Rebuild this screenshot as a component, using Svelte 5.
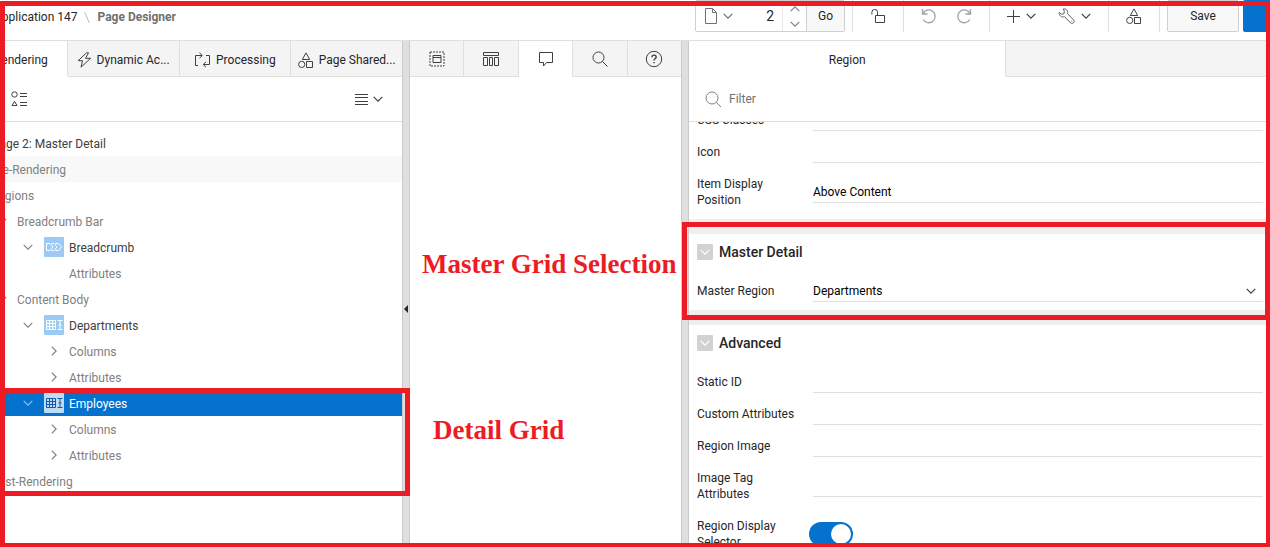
<script>
  const tree = [
    { id: 1, label: 'Page 2: Master Detail', level: -1, icon: 'page', dark: true },
    { id: 2, label: 'Pre-Rendering', level: 0, twisty: 'right', hover: true },
    { id: 3, label: 'Regions', level: 0, twisty: 'down' },
    { id: 4, label: 'Breadcrumb Bar', level: 1, twisty: 'down' },
    { id: 5, label: 'Breadcrumb', level: 2, twisty: 'down', icon: 'crumb', dark: true },
    { id: 6, label: 'Attributes', level: 3 },
    { id: 7, label: 'Content Body', level: 1, twisty: 'down' },
    { id: 8, label: 'Departments', level: 2, twisty: 'down', icon: 'grid', dark: true },
    { id: 9, label: 'Columns', level: 3, twisty: 'right' },
    { id: 10, label: 'Attributes', level: 3, twisty: 'right' },
    { id: 11, label: 'Employees', level: 2, twisty: 'down', icon: 'grid', selected: true },
    { id: 12, label: 'Columns', level: 3, twisty: 'right' },
    { id: 13, label: 'Attributes', level: 3, twisty: 'right' },
    { id: 14, label: 'Post-Rendering', level: 0, twisty: 'right' }
  ];

  const sections = [
    {
      fields: [
        { id: 'css-classes', label: 'CSS Classes', kind: 'text' },
        { id: 'icon', label: 'Icon', kind: 'text' },
        { id: 'item-position', label: 'Item Display Position', kind: 'select', value: 'Above Content' }
      ]
    },
    {
      title: 'Master Detail',
      fields: [
        { id: 'master-region', label: 'Master Region', kind: 'select', value: 'Departments', arrow: true }
      ]
    },
    {
      title: 'Advanced',
      fields: [
        { id: 'static-id', label: 'Static ID', kind: 'text' },
        { id: 'custom-attributes', label: 'Custom Attributes', kind: 'text' },
        { id: 'region-image', label: 'Region Image', kind: 'text' },
        { id: 'image-tag', label: 'Image Tag Attributes', kind: 'text' },
        { id: 'display-selector', label: 'Region Display Selector', kind: 'switch' }
      ]
    }
  ];
</script>

{#snippet chevron(dir = 'down')}
  <svg width="10" height="10" viewBox="0 0 10 10" class="chev {dir}" aria-hidden="true">
    <path d="M0.7 2.8 5 7.1 9.3 2.8" />
  </svg>
{/snippet}

{#snippet shapes()}
  <svg width="16" height="16" viewBox="0 0 16 16" aria-hidden="true">
    <path d="M8 .9 11.7 7.5H4.3ZM8.5 9.5h6v6h-6z" /><circle cx="3.7" cy="12.4" r="3.1" />
  </svg>
{/snippet}

<div class="app">
  <header>
    <nav class="crumbs" aria-label="Breadcrumb">
      <a href="#app">Application 147</a>
      <svg width="6" height="13" viewBox="0 0 6 13" aria-hidden="true"><path d="M.7 1 5.3 12" /></svg>
      <strong>Page Designer</strong>
    </nav>
    <div class="tools">
      <div class="pager">
        <button class="finder" aria-label="Page finder">
          <svg width="12" height="16" viewBox="0 0 12 16" aria-hidden="true"><path d="M.5.5h7l4 4v11H.5zM7.5.5v4h4" /></svg>
          {@render chevron()}
        </button>
        <input class="number" aria-label="Page number" value="2" />
        <div class="stepper">
          <button aria-label="Next page">{@render chevron('up')}</button>
          <button aria-label="Previous page">{@render chevron()}</button>
        </div>
        <button class="go">Go</button>
      </div>
      <div class="group lock">
        <button aria-label="Lock">
          <svg width="14" height="15" viewBox="0 0 14 15" aria-hidden="true"><path d="M4.5 6.5h9v7h-9zM6.5 6.5V3.2a2.7 2.7 0 0 0-5.6 0V5.5" /></svg>
        </button>
      </div>
      <div class="group history">
        <button aria-label="Undo">
          <svg width="16" height="16" viewBox="0 0 16 16" aria-hidden="true"><path d="M1.5 1v5h5M2 5.6A6.4 6.4 0 1 1 2.2 11.5" /></svg>
        </button>
        <button aria-label="Redo">
          <svg width="16" height="16" viewBox="0 0 16 16" aria-hidden="true"><path d="M14.5 1v5h-5M14 5.6A6.4 6.4 0 1 0 13.8 11.5" /></svg>
        </button>
      </div>
      <div class="group create">
        <button aria-label="Create">
          <svg width="13" height="13" viewBox="0 0 13 13" aria-hidden="true"><path d="M6.5 0v13M0 6.5h13" /></svg>
          {@render chevron()}
        </button>
        <button aria-label="Utilities" class="wrench">
          <svg width="17" height="17" viewBox="0 0 17 17" aria-hidden="true">
            <path d="M5.200 1C7.900.3 10.300 2.600 9.500 5.600L15.600 11.900C17.300 13.800 14.700 16.700 12.600 14.900L6.600 8.700C3.500 9.700.8 7.400 1.200 4.400L3.600 6.300 6 5.700 6.300 3.200Z" />
            <path d="M13.500 13.200h.8" />
          </svg>
          {@render chevron()}
        </button>
      </div>
      <div class="group shared">
        <button aria-label="Shared components">{@render shapes()}</button>
      </div>
      <button class="save">Save</button>
      <button class="run" aria-label="Save and run page"></button>
    </div>
  </header>

  <main>
    <section class="panel side">
      <div class="tabs" role="tablist">
        <button role="tab" aria-selected="true" class="tab on">
          <svg width="14" height="14" viewBox="0 0 14 14" aria-hidden="true"><path d="M1 2.500h12M1 7h12M1 11.500h12" /></svg>
          Rendering
        </button>
        <button role="tab" aria-selected="false" class="tab">
          <svg width="15" height="16" viewBox="0 0 15 16" aria-hidden="true"><path d="M9.500.8 1.200 8.700H5.500L4 15.200 13.600 6.300H8.500L11.500.8Z" /></svg>
          Dynamic Ac...
        </button>
        <button role="tab" aria-selected="false" class="tab">
          <svg width="17" height="16" viewBox="0 0 17 16" aria-hidden="true">
            <path d="M4 13.500H1.500V3.500H8M5.500.8 8.300 3.500 5.500 6.200M12 3.500h3.500v9H9.500M12 9.800 9.200 12.500 12 15.200" />
          </svg>
          Processing
        </button>
        <button role="tab" aria-selected="false" class="tab">{@render shapes()} Page Shared...</button>
      </div>
      <div class="bar">
        <button aria-label="Group by component type">
          <svg width="16" height="16" viewBox="0 0 16 16" aria-hidden="true">
            <circle cx="3.500" cy="3.500" r="2.700" /><path d="M3.500 10.300 6 14.500H1ZM9 2.500H16M9 5.500H16M9 11.500H16M9 14.500H16" />
          </svg>
        </button>
        <button aria-label="Tree menu">
          <svg width="13" height="11" viewBox="0 0 13 11" aria-hidden="true"><path d="M0 .5h13M0 3.500h13M0 7.500h13M0 10.500h13" /></svg>
          {@render chevron()}
        </button>
      </div>
      <ul class="tree" role="tree">
        {#each tree as node (node.id)}
          <li
            role="treeitem"
            aria-selected={!!node.selected}
            class:dark={node.dark}
            class:hover={node.hover}
            class:selected={node.selected}
            style="--level: {node.level}"
          >
            <span class="twisty">{#if node.twisty}{@render chevron(node.twisty)}{/if}</span>
            {#if node.icon}
              <span class="node-icon">
                {#if node.icon === 'grid'}
                  <svg width="18" height="12" viewBox="0 0 18 12" aria-hidden="true">
                    <path d="M1.500 1.500h9v9h-9zM1.500 4.500h9M1.500 7.500h9M4.500 1.500v9M7.500 1.500v9M12.500 1.500h5M12.500 10.500h5M15 1.500v9M13.500 6h3" />
                  </svg>
                {:else if node.icon === 'crumb'}
                  <svg width="18" height="10" viewBox="0 0 18 10" aria-hidden="true">
                    <path d="M1.500 1.500H5L8 5 5 8.500H1.500zM6.500 1.500h2.500L12 5 9 8.500H6.500M10.500 1.500h3L16.500 5 13.500 8.500H10.500" />
                  </svg>
                {/if}
              </span>
            {/if}
            <span class="name">{node.label}</span>
          </li>
        {/each}
      </ul>
    </section>

    <div class="splitter">
      <svg width="4" height="8" viewBox="0 0 4 8" aria-hidden="true"><path d="M4 0v8L0 4z" /></svg>
    </div>

    <section class="panel middle">
      <div class="tabs" role="tablist">
        <button role="tab" aria-selected="false" class="tab" aria-label="Layout">
          <svg width="16" height="16" viewBox="0 0 16 16" aria-hidden="true">
            <path stroke-dasharray="2 1" d="M1 1h14v14H1z" /><path d="M4 4.500h8v7H4zM4 6.500h8" />
          </svg>
        </button>
        <button role="tab" aria-selected="false" class="tab" aria-label="Component view">
          <svg width="18" height="16" viewBox="0 0 18 16" aria-hidden="true">
            <path d="M1.500 1.500h15v3h-15zM1.500 6.500h4v8h-4zM7.500 6.500h3v8h-3zM12.500 6.500h4v8h-4z" />
          </svg>
        </button>
        <button role="tab" aria-selected="true" class="tab on" aria-label="Messages">
          <svg width="16" height="16" viewBox="0 0 16 16" aria-hidden="true"><path d="M1.500 1.500h13v10H8.500L5.500 15V11.500h-4z" /></svg>
        </button>
        <button role="tab" aria-selected="false" class="tab" aria-label="Page search">
          <svg width="16" height="16" viewBox="0 0 16 16" aria-hidden="true"><circle cx="6.500" cy="6.500" r="5.500" /><path d="M10.500 10.500 15.500 15.500" /></svg>
        </button>
        <button role="tab" aria-selected="false" class="tab" aria-label="Help">
          <svg width="18" height="18" viewBox="0 0 18 18" aria-hidden="true">
            <circle cx="9" cy="9" r="7.700" /><path stroke-width="1.400" d="M6.900 7.200C6.900 4.500 11.200 4.500 11.200 7.100 11.200 8.800 9 8.700 9 10.500M9 11.900v1.400" />
          </svg>
        </button>
      </div>
    </section>

    <div class="splitter"></div>

    <section class="panel props">
      <div class="tabs" role="tablist">
        <button role="tab" aria-selected="true" class="tab on">Region</button>
        <span class="rest"></span>
      </div>
      <div class="bar filter">
        <svg width="17" height="17" viewBox="0 0 17 17" aria-hidden="true"><circle cx="7" cy="7" r="6" /><path d="M11.300 11.300 16 16" /></svg>
        <input type="search" aria-label="Filter" placeholder="Filter" />
      </div>
      <div class="scroller">
        {#each sections as section}
          <section class="block">
            {#if section.title}
              <h2><button aria-label="Collapse">{@render chevron()}</button>{section.title}</h2>
            {/if}
            {#each section.fields as field (field.id)}
              <div class="field">
                <label for={field.id}>{field.label}</label>
                {#if field.kind === 'text'}
                  <input id={field.id} type="text" />
                {:else if field.kind === 'select'}
                  <div class="choice">
                    <select id={field.id}><option>{field.value}</option></select>
                    {#if field.arrow}{@render chevron()}{/if}
                  </div>
                {:else}
                  <input id={field.id} class="switch" type="checkbox" role="switch" checked />
                {/if}
              </div>
            {/each}
          </section>
        {/each}
      </div>
    </section>

    <div class="mark mark-detail"></div>
    <div class="mark mark-master"></div>
    <p class="note note-master">Master Grid Selection</p>
    <p class="note note-detail">Detail Grid</p>
  </main>
  <div class="mark outline"></div>
</div>

<style>
  :global(body) { margin: 0; background: #fff; }
  .app {
    --red: #ed1c24;
    --line: #dfdfdf;
    --clip: 44px;
    position: relative;
    display: flex;
    flex-direction: column;
    height: 100vh;
    overflow: hidden;
    font: 12px/16px Roboto, "Open Sans", sans-serif;
    color: #262626;
  }
  .app * { box-sizing: border-box; }
  button, input, select { font: inherit; color: inherit; border: 0; margin: 0; padding: 0; background: none; border-radius: 0; outline: 0; }
  svg { fill: none; stroke: #404040; stroke-width: 1; flex: none; display: block; }
  .chev { stroke-width: 1.2; }
  .chev.right { transform: rotate(-90deg); }
  .chev.up { transform: rotate(180deg); }

  header { display: flex; flex: none; justify-content: space-between; height: 41px; border-bottom: 1px solid var(--line); }
  .crumbs { display: flex; align-items: center; gap: 7px; height: 34px; margin-left: -6px; white-space: nowrap; }
  .crumbs a { color: #262626; text-decoration: none; }
  .crumbs svg { stroke: #bbb; }
  .crumbs strong { color: #707070; font-weight: 700; }
  .tools { display: flex; height: 32px; }
  .tools button { display: flex; align-items: center; justify-content: center; gap: 6px; }
  .pager { display: flex; width: 150px; margin-right: 7px; border: 1px solid #cfcfcf; border-radius: 2px; }
  .finder { width: 46px; }
  .finder svg { stroke: #707070; }
  .number { width: 40px; padding-right: 8px; text-align: right; font-size: 14px; }
  .stepper { display: flex; flex-direction: column; justify-content: center; width: 24px; border-left: 1px solid #e8e8e8; }
  .stepper button { flex: 1; }
  .stepper svg { stroke: #808080; }
  .go { flex: 1; border-left: 1px solid #cfcfcf; background: #f8f8f8; }
  .group { display: flex; align-items: center; justify-content: center; border-left: 1px solid var(--line); }
  .lock { width: 51px; }
  .history { width: 86px; gap: 19px; }
  .history svg { stroke: #a0a0a0; stroke-width: 1.300; }
  .create { width: 119px; gap: 22px; }
  .wrench svg:first-child { stroke: #606060; }
  .shared { width: 52px; border-right: 1px solid var(--line); }
  .save { width: 72px; margin: 0 4px 0 7px; border: 1px solid #cfcfcf; border-radius: 2px; background: #f8f8f8; }
  .run { width: 27px; border-radius: 2px 0 0 2px; background: #0572ce; }

  main {
    position: relative;
    display: grid;
    flex: 1;
    min-height: 0;
    grid-template-columns: 446fr 8px 271fr 8px 581fr;
    margin-left: calc(-1 * var(--clip));
  }
  .panel { display: flex; flex-direction: column; min-width: 0; min-height: 0; overflow: hidden; }
  .splitter { display: flex; align-items: center; justify-content: flex-end; padding-right: 1px; border: solid #cacaca; border-width: 0 1px; background: #dfdfdf; }
  .splitter svg { fill: #262626; stroke: none; margin-top: 30px; }
  .tabs { display: flex; flex: none; height: 36px; }
  .tab {
    display: flex; flex: 1; align-items: center; justify-content: center; gap: 5px; min-width: 0; padding-top: 2px;
    border-right: 1px solid var(--line); border-bottom: 1px solid var(--line);
    background: #f4f4f4; white-space: nowrap;
  }
  .middle .tab { padding-top: 0; }
  .tab:last-child { border-right: 0; }
  .tab.on { background: #fff; border-bottom-color: #fff; }
  .bar { display: flex; flex: none; align-items: center; justify-content: space-between; height: 45px; border-bottom: 1px solid var(--line); }
  .side .bar { padding: 0 19px 0 55px; }
  .bar button { display: flex; align-items: center; gap: 5px; }

  .tree { list-style: none; margin: 8px 0 0; padding: 0; }
  .tree li { display: flex; align-items: center; height: 26px; padding-left: calc(38px + var(--level) * 26px - 26px); color: #808080; }
  .tree li:first-child { padding-left: 10px; }
  .tree li:first-child .twisty { display: none; }
  .name { padding-top: 1px; }
  .twisty { display: flex; justify-content: center; width: 16px; margin-right: 7px; }
  .twisty svg { stroke: #808080; }
  .node-icon { display: flex; align-items: center; justify-content: center; width: 20px; height: 20px; margin: 0 5px 0 1px; border-radius: 1px; background: #9bcbf4; }
  .node-icon svg { stroke: #fff; }
  .tree .dark { color: #404040; }
  .tree .hover { background: #f8f8f8; }
  .tree .selected { background: #0572ce; color: #fff; }
  .selected .twisty svg { stroke: #8fc4f0; }
  .selected .node-icon { background: #c0dcf3; }
  .selected .node-icon svg { stroke: #1259b0; }

  .props .tab { flex: 317 0 0; }
  .rest { flex: 264 0 0; background: #f4f4f4; border-bottom: 1px solid var(--line); }
  .filter { justify-content: flex-start; gap: 7px; padding: 0 16px; }
  .filter svg { stroke: #808080; }
  .filter input { flex: 1; appearance: none; }
  .filter input::placeholder { color: #707070; opacity: 1; }
  .scroller { flex: 1; min-height: 0; overflow: hidden; background: #efefef; }
  .block { margin-bottom: 15px; padding-bottom: 3px; background: #fff; }
  .block:first-child { margin-top: -18px; }
  h2 { display: flex; align-items: center; gap: 6px; height: 41px; margin: 0; padding: 0 8px 5px; font-size: 14px; line-height: 20px; font-weight: 500; }
  h2 button { display: flex; align-items: center; justify-content: center; width: 16px; height: 16px; border-radius: 1px; background: #d2d2d2; }
  h2 svg { stroke: #fff; stroke-width: 1.500; }
  .field { display: grid; grid-template-columns: 108px 1fr; column-gap: 8px; align-items: center; padding: 0 7px 0 8px; }
  label { padding: 8px 12px 8px 0; }
  label[for="custom-attributes"] { padding-right: 0; }
  .field input[type="text"], .choice { width: 100%; height: 22px; border-bottom: 1px solid var(--line); }
  .choice { display: flex; align-items: center; padding-right: 7px; }
  select { flex: 1; appearance: none; color: #000; }
  .switch { appearance: none; position: relative; justify-self: start; width: 44px; height: 24px; margin-left: -4px; border-radius: 12px; background: #0572ce; }
  .switch::after { content: ""; position: absolute; top: 2px; right: 2px; width: 20px; height: 20px; border-radius: 50%; background: #fff; }

  .mark { position: absolute; border: 5px solid var(--red); pointer-events: none; }
  .outline { inset: 1px 0 0; border-width: 5px 4px 4px 5px; }
  .mark-detail { grid-column: 1 / 3; top: 347px; left: var(--clip); right: 0; height: 108px; }
  .mark-master { grid-column: 4 / 6; top: 181px; left: 1px; right: 0; height: 98px; }
  .note { position: absolute; grid-column: 3 / 4; margin: 0; color: var(--red); font: bold 27px/32px "Liberation Serif", serif; white-space: nowrap; }
  .note-master { top: 207px; left: 12px; }
  .note-detail { top: 373px; left: 23px; }
</style>
